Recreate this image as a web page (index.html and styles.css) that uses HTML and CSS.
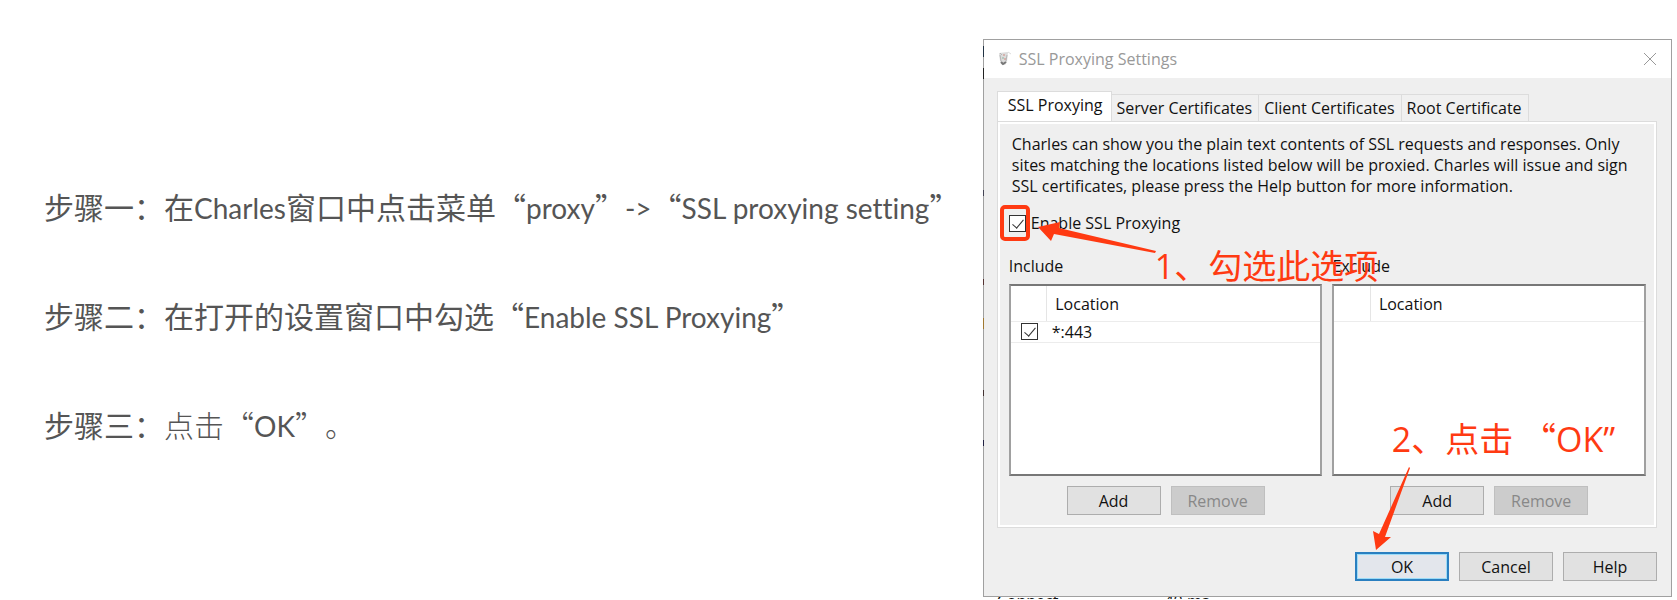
FILE: index.html
```
<!DOCTYPE html>
<html lang="zh-CN">
<head>
    <meta charset="UTF-8">
    <meta name="viewport" content="width=device-width, initial-scale=1.0">
    <title>SSL Proxying Settings</title>
    <link rel="stylesheet" href="styles.css">
</head>

<body>
    <div class="page">
        <div class="steps">
            <p>步骤一：在<span class="en">Charles</span>窗口中点击菜单<span class="ql">“</span><span class="en">proxy</span><span class="qr">”</span><span class="en">-&gt;</span><span class="ql">“</span><span class="en">SSL proxying setting</span><span class="qr">”</span></p>
            <p>步骤二：在打开的设置窗口中勾选<span class="ql">“</span><span class="en">Enable SSL Proxying</span><span class="qr">”</span></p>
            <p>步骤三：<span class="thin">点击<span class="ql">“</span></span><span class="en">OK</span><span class="thin"><span class="qr">”</span>。</span></p>
        </div>

        <div class="shot">
            <div class="dialog">
                <div class="titlebar">
                    <svg class="logo" width="14" height="16" viewBox="0 0 14 16">
                        <path d="M1 2L10 1L9 11L7 14H4L2 10Z" fill="#dcdcdc"/>
                        <path d="M2 2L4 4M2 4L3 10M9 4L8 10" fill="none" stroke="#b5b5b5"/>
                        <path d="M3 11L5 13L8 11" fill="none" stroke="#777" stroke-width="2"/>
                        <path d="M5 4h2M6 8h2" stroke="#d08a80"/>
                        <path d="M4 7h2" stroke="#8fb5a0"/>
                        <path d="M10 1l3 2" stroke="#ddd"/>
                    </svg>
                    <span class="title">SSL Proxying Settings</span>
                    <button class="close" aria-label="Close">
                        <svg width="14" height="14" viewBox="0 0 14 14"><path d="M1 1L13 13M13 1L1 13" stroke="#999" fill="none"/></svg>
                    </button>
                </div>

                <div class="content">
                    <div class="tabs">
                        <button class="tab active">SSL Proxying</button>
                        <button class="tab">Server Certificates</button>
                        <button class="tab">Client Certificates</button>
                        <button class="tab">Root Certificate</button>
                    </div>
                    <div class="panel">
                        <p class="info">Charles can show you the plain text contents of SSL requests and responses. Only sites matching the locations listed below will be proxied. Charles will issue and sign SSL certificates, please press the Help button for more information.</p>
                        <label class="enable"><input type="checkbox" checked> Enable SSL Proxying</label>

                        <div class="lists">
                            <div class="list">
                                <div class="list-name">Include</div>
                                <div class="box">
                                    <table>
                                        <tr><th class="tick"></th><th>Location</th></tr>
                                        <tr><td class="tick"><input type="checkbox" aria-label="*:443" checked></td><td>*:443</td></tr>
                                    </table>
                                </div>
                                <div class="buttons">
                                    <button class="btn">Add</button>
                                    <button class="btn" disabled>Remove</button>
                                </div>
                            </div>
                            <div class="list">
                                <div class="list-name">Exclude</div>
                                <div class="box">
                                    <table>
                                        <tr><th class="tick"></th><th>Location</th></tr>
                                    </table>
                                </div>
                                <div class="buttons">
                                    <button class="btn">Add</button>
                                    <button class="btn" disabled>Remove</button>
                                </div>
                            </div>
                        </div>
                    </div>

                    <div class="footer">
                        <button class="btn ok">OK</button>
                        <button class="btn">Cancel</button>
                        <button class="btn">Help</button>
                    </div>
                </div>

                <!-- red notes over the dialog -->
                <div class="mark"></div>
                <svg class="arrow arrow1" width="120" height="32" viewBox="0 0 120 32">
                    <path d="M0 5L22 0L21 6L118 29L117 31L16 12L13 19Z" fill="#ff3a12"/>
                </svg>
                <div class="note note1">1、勾选此选项</div>
                <div class="note note2">2、点击 <span class="ql">“</span>OK”</div>
                <svg class="arrow arrow2" width="38" height="84" viewBox="0 0 38 84">
                    <path d="M37 1L36 0L6 67L0 64L3 83L18 70L12 70Z" fill="#ff3a12"/>
                </svg>
            </div>
            <div class="behind"><span>Connect</span><span>40 ms</span></div>
        </div>
    </div>
</body>
</html>
```
FILE: styles.css
```
* {
    box-sizing: border-box;
}

body {
    margin: 0;
    background: #fff;
    font-family: "Open Sans", "Noto Sans CJK SC", sans-serif;
    font-size: 16px;
    color: #111;
}

.page {
    display: flex;
    align-items: flex-start;
    padding: 39px 5px 0 44px;
}

/* left: steps */
.steps {
    flex: 1;
    min-width: 0;
    padding-top: 145px;
    font-family: "Noto Sans CJK SC", sans-serif;
    font-size: 30px;
    color: #555;
    white-space: nowrap;
}

.steps p {
    margin: 0 0 62px;
    line-height: 45px;
}

.en {
    font-family: Lato, sans-serif;
    font-size: 28px;
    font-variant-ligatures: none;
}

.ql,
.qr {
    display: inline-block;
    width: 1em;
    font-family: "Noto Sans CJK SC", sans-serif;
}

.ql {
    text-align: right;
}

.thin {
    font-weight: 300;
}

/* right: dialog */
.shot {
    flex: 0 0 41.1vw;
}

.dialog {
    position: relative;
    border: 1px solid #a0a0a0;
    background: #efefef;
}

/* bits of the window underneath along the left edge */
.dialog::before {
    content: "";
    position: absolute;
    left: -1px;
    top: 0;
    width: 1px;
    height: 100%;
    background: linear-gradient(#a0a0a0 1%, #234 1%, #234 3%, #a0a0a0 3%, #a0a0a0 5%, #222 5%, #222 7%, #a0a0a0 7%, #a0a0a0 27%, #445 27%, #445 28%, #a0a0a0 28%, #a0a0a0 43%, #533 43%, #533 44%, #a0a0a0 44%, #a0a0a0 50%, #a07830 50%, #a07830 52%, #a0a0a0 52%, #a0a0a0 63%, #433 63%, #433 64%, #a0a0a0 64%, #a0a0a0 72%, #224 72%, #224 73%, #a0a0a0 73%);
}

.titlebar {
    display: flex;
    align-items: center;
    height: 38px;
    padding: 0 14px;
    background: #fff;
    color: #999;
}

.title {
    flex: 1;
    margin-left: 7px;
}

.close {
    display: flex;
    padding: 0;
    border: none;
    background: none;
}

.content {
    padding: 13px 14px 15px 13px;
}

.tabs {
    display: flex;
    align-items: flex-end;
}

.tab {
    height: 27px;
    padding: 0 6px 0 5px;
    border: 1px solid #dcdcdc;
    border-width: 1px 1px 0 0;
    background: #f0f0f0;
    font: inherit;
    line-height: 26px;
    color: #111;
}

.tab.active {
    height: 30px;
    padding: 0 8px 3px 10px;
    border-left-width: 1px;
    background: #fff;
}

.panel {
    padding: 12px 8px 12px 9px;
    border: 1px solid #dcdcdc;
    box-shadow: inset 0 0 0 2px #fff;
}

.info {
    margin: 0 8px 0 5px;
    line-height: 21px;
}

.enable {
    display: flex;
    align-items: center;
    gap: 5px;
    margin: 15px 0 20px 2px;
    line-height: 22px;
}

input[type=checkbox] {
    appearance: none;
    display: block;
    width: 17px;
    height: 17px;
    margin: 0;
    border: 1px solid #333;
    background: #fff;
}

input[type=checkbox]:checked::after {
    content: "";
    display: block;
    width: 5px;
    height: 10px;
    margin: 1px 0 0 5px;
    border: solid #333;
    border-width: 0 1px 1px 0;
    transform: rotate(40deg);
}

.lists {
    display: grid;
    grid-template-columns: 1fr 1fr;
    gap: 10px;
    padding: 0 2px;
}

.list-name {
    line-height: 24px;
    margin-bottom: 6px;
}

.box {
    height: 192px;
    border: 2px solid #a0a0a0;
    border-top-color: #777;
    border-bottom-color: #777;
    background: #fff;
}

table {
    width: 100%;
    border-collapse: collapse;
}

th,
td {
    height: 21px;
    padding: 0 0 0 5px;
    border-bottom: 1px solid #ececec;
    text-align: left;
    font-weight: normal;
    line-height: 20px;
}

th {
    height: 35px;
    padding: 2px 0 0 8px;
}

th.tick {
    border-right: 1px solid #e5e5e5;
}

.tick {
    width: 36px;
    padding-left: 10px;
}

.buttons,
.footer {
    display: flex;
    justify-content: center;
    gap: 10px;
    margin-top: 10px;
}

.footer {
    justify-content: flex-end;
    margin-top: 24px;
}

.btn {
    width: 94px;
    height: 29px;
    padding: 0;
    border: 1px solid #adadad;
    background: #e1e1e1;
    font: inherit;
    color: #111;
}

.btn:disabled {
    border-color: #bfbfbf;
    background: #ccc;
    color: #888;
}

.btn.ok {
    border: 2px solid #2a7fc0;
    box-shadow: inset 0 0 0 1px #9cdcf8;
    background: #e3e6ec;
}

/* notes */
.mark {
    position: absolute;
    left: 16px;
    top: 165px;
    width: 30px;
    height: 36px;
    border: 4px solid #ff3a12;
    border-radius: 5px;
}

.arrow {
    position: absolute;
}

.arrow1 {
    left: 54px;
    top: 182px;
}

.arrow2 {
    left: 389px;
    top: 427px;
}

.note {
    position: absolute;
    color: #ff3a12;
    font-size: 34px;
    line-height: 40px;
    white-space: pre;
}

.note1 {
    left: 171px;
    top: 206px;
}

.note2 {
    left: 408px;
    top: 378px;
}

/* window underneath, only its top edge shows */
.behind {
    display: flex;
    gap: 106px;
    height: 2px;
    padding-left: 14px;
    overflow: hidden;
    line-height: 8px;
}
```
